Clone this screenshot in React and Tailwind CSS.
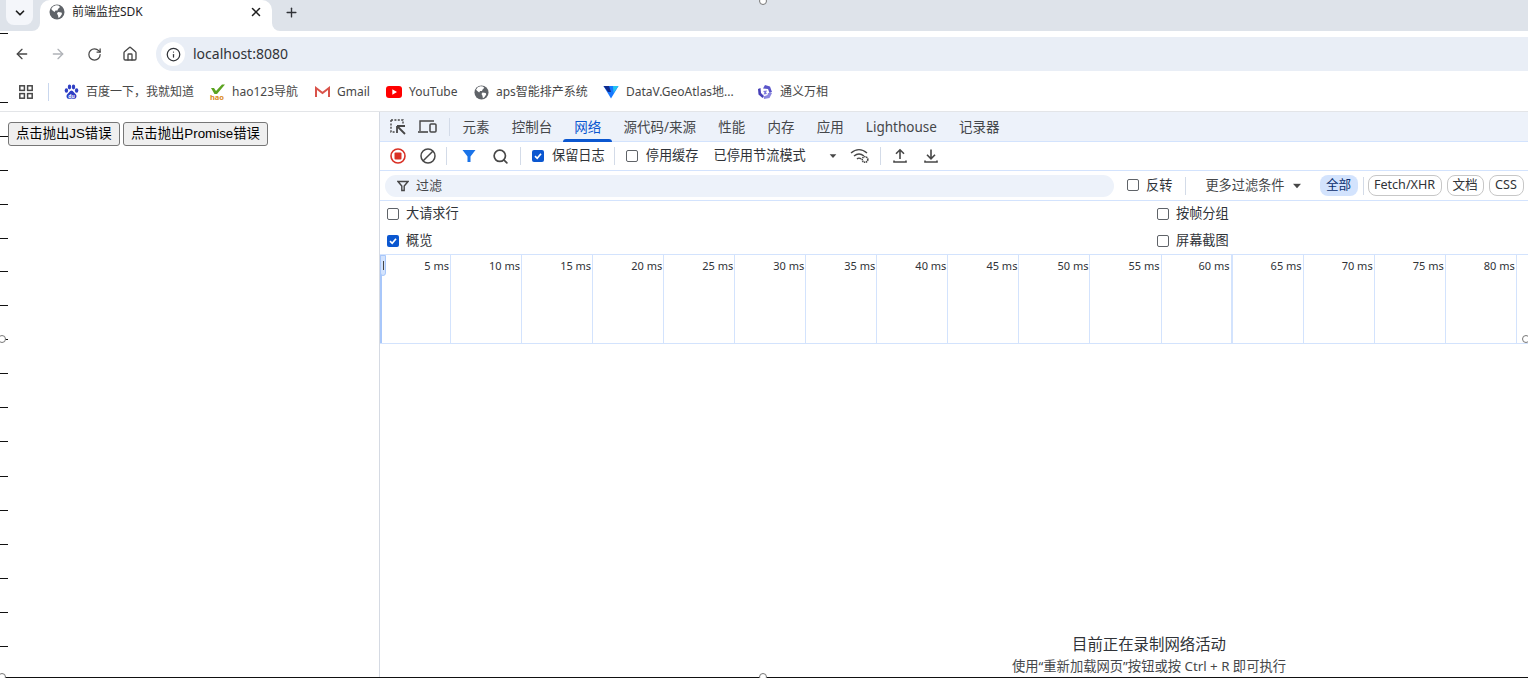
import React from 'react';
import { ArrowLeft, ArrowRight, RotateCw, Home, Info, Plus, X, ChevronDown, Search } from 'lucide-react';

const ticks = [33, 102, 136, 170, 204, 238, 271, 305, 339, 373, 407, 441, 476, 510, 544, 578, 612, 646];
const handles = [[763, 1], [1526, 339], [2, 339], [2, 677], [763, 677]];
const devTabs = ['元素', '控制台', '网络', '源代码/来源', '性能', '内存', '应用', 'Lighthouse', '记录器'];
const timeLabels = [5, 10, 15, 20, 25, 30, 35, 40, 45, 50, 55, 60, 65, 70, 75, 80];

function GlobeIcon({ size = 16 }) {
    return (
        <svg width={size} height={size} viewBox="0 0 16 16" className="shrink-0">
            <circle cx="8" cy="8" r="7.5" fill="#5f6368" />
            <path d="M7 1.2 L9.5 1.5 L11 3 L9 5 L8.5 6.5 L6.5 6.5 L5.5 8 L3.5 6.5 L2.2 5 L4 2.5 Z" fill="#fff" />
            <path d="M9 8 L12.5 8.5 L13 10 L11 13 L9.5 14 L9 11.5 L8 9.5 Z" fill="#fff" />
        </svg>
    );
}

function Bookmark({ icon, label, width }) {
    return (
        <div className="flex items-center gap-[7px] shrink-0 text-[12px] text-[#474747]" style={{ width }}>
            {icon}
            <span className="whitespace-nowrap">{label}</span>
        </div>
    );
}

function Check({ checked, label, wide, className = '' }) {
    return (
        <label className={`flex items-center ${wide ? 'gap-[8px]' : 'gap-[7px]'} text-[13.2px] text-[#303338] ${className}`}>
            {checked ? (
                <span className="w-[12px] h-[12px] rounded-[2px] bg-[#0b57d0] flex items-center justify-center shrink-0">
                    <svg width="10" height="10" viewBox="0 0 10 10"><path d="M2 5.2 L4.2 7.3 L8 2.8" stroke="#fff" strokeWidth="1.7" fill="none" /></svg>
                </span>
            ) : (
                <span className="w-[12px] h-[12px] rounded-[2px] border border-[#5f6368] bg-white shrink-0" />
            )}
            <span className="whitespace-nowrap">{label}</span>
        </label>
    );
}

function Sep({ className = '' }) {
    return <div className={`w-px h-[18px] bg-[#d3dbe8] shrink-0 ${className}`} />;
}

function Caret({ className = '' }) {
    return (
        <svg width="10" height="6" viewBox="0 0 10 6" className={`shrink-0 ${className}`}>
            <path d="M0.5 0.5 H9.5 L5 5.5 Z" fill="#474747" />
        </svg>
    );
}

export default function App() {
    return (
        <div className="relative w-[1528px] h-[678px] overflow-hidden bg-white flex flex-col" style={{ fontFamily: '"Noto Sans", "Noto Sans CJK SC", sans-serif' }}>
            {/* tab strip */}
            <div className="h-[31px] bg-[#dee3ea] flex shrink-0 relative">
                <div className="w-[27px] h-[25px] ml-[6px] rounded-b-[8px] bg-[#f4f6fa] flex items-center justify-center">
                    <ChevronDown size={14} strokeWidth={3} className="text-[#1f1f1f]" />
                </div>
                <div className="relative w-[232px] h-[31px] ml-[7px] bg-white rounded-t-[10px] flex items-center pl-[9px] pr-[9px] pb-[8px]">
                    <GlobeIcon />
                    <span className="ml-[7px] text-[12px] text-[#1f1f1f] flex-1">前端监控SDK</span>
                    <X size={14} strokeWidth={2.6} className="text-[#1f1f1f]" />
                    <div className="absolute -left-[8px] bottom-0 w-[8px] h-[8px] bg-white">
                        <div className="w-full h-full bg-[#dee3ea] rounded-br-[8px]" />
                    </div>
                    <div className="absolute -right-[8px] bottom-0 w-[8px] h-[8px] bg-white">
                        <div className="w-full h-full bg-[#dee3ea] rounded-bl-[8px]" />
                    </div>
                </div>
                <div className="ml-[12px] h-[24px] flex items-center">
                    <Plus size={15} strokeWidth={2.2} className="text-[#303338]" />
                </div>
            </div>

            {/* address bar */}
            <div className="h-[40px] pt-[6px] flex items-center shrink-0 bg-white">
                <ArrowLeft size={16} strokeWidth={2} className="ml-[14px] text-[#474747]" />
                <ArrowRight size={16} strokeWidth={2} className="ml-[20px] text-[#b0b3b8]" />
                <RotateCw size={15} strokeWidth={2} className="ml-[21px] text-[#474747]" />
                <Home size={16} strokeWidth={2} className="ml-[20px] text-[#474747]" />
                <div className="ml-[18px] flex-1 h-[34px] bg-[#e9eef6] rounded-l-full flex items-center pl-[5px]">
                    <div className="w-[24px] h-[24px] rounded-full bg-white flex items-center justify-center">
                        <Info size={15} strokeWidth={2} className="text-[#303338]" />
                    </div>
                    <span className="ml-[8px] text-[14px] text-[#303338] -mt-[1px]">localhost:8080</span>
                </div>
            </div>

            {/* bookmarks */}
            <div className="h-[41px] pt-[2px] flex items-center shrink-0 bg-white border-b border-[#e3e5e8] pl-[19px]">
                <svg width="14" height="14" viewBox="0 0 14 14" className="shrink-0">
                    <g fill="none" stroke="#474747" strokeWidth="1.5">
                        <rect x="0.8" y="0.8" width="4.6" height="4.6" />
                        <rect x="8.6" y="0.8" width="4.6" height="4.6" />
                        <rect x="0.8" y="8.6" width="4.6" height="4.6" />
                        <rect x="8.6" y="8.6" width="4.6" height="4.6" />
                    </g>
                </svg>
                <Sep className="ml-[15px] mr-[15px] !bg-[#c9d7ee]" />
                <Bookmark width="145px" label="百度一下，我就知道" icon={
                    <svg width="15" height="16" viewBox="0 0 15 16" className="shrink-0">
                        <g fill="#2f3fc4">
                            <ellipse cx="2.4" cy="6.5" rx="1.7" ry="2.2" />
                            <ellipse cx="5.5" cy="3" rx="1.7" ry="2.4" />
                            <ellipse cx="9.5" cy="3" rx="1.7" ry="2.4" />
                            <ellipse cx="12.6" cy="6.5" rx="1.7" ry="2.2" />
                            <path d="M7.5 6.5 C5.5 6.5 5 9 3.5 10 C2 11.2 2 14.8 5 14.8 C6 14.8 6.5 14.4 7.5 14.4 C8.5 14.4 9 14.8 10 14.8 C13 14.8 13 11.2 11.5 10 C10 9 9.5 6.5 7.5 6.5 Z" />
                        </g>
                        <text x="7.5" y="13.5" textAnchor="middle" fontSize="5" fontWeight="700" fill="#fff">du</text>
                    </svg>
                } />
                <Bookmark width="106px" label="hao123导航" icon={
                    <svg width="16" height="16" viewBox="0 0 16 16" className="shrink-0">
                        <path d="M2 4 L5 4 L7 7 L13 0.5 L16 0.5 L8 10 L5.5 10 Z" fill="#5ba320" />
                        <text x="8" y="15.5" textAnchor="middle" fontSize="7.5" fontWeight="700" fill="#d98a1a">hao</text>
                    </svg>
                } />
                <Bookmark width="71px" label="Gmail" icon={
                    <svg width="15" height="12" viewBox="0 0 15 12" className="shrink-0">
                        <path d="M1 11 V2 L7.5 7 L14 2 V11" fill="none" stroke="#d9534a" strokeWidth="2" />
                    </svg>
                } />
                <Bookmark width="88px" label="YouTube" icon={
                    <svg width="16" height="12" viewBox="0 0 16 12" className="shrink-0">
                        <rect width="16" height="12" rx="3" fill="#f00" />
                        <path d="M6.3 3.2 L11 6 L6.3 8.8 Z" fill="#fff" />
                    </svg>
                } />
                <Bookmark width="129px" label="aps智能排产系统" icon={<GlobeIcon size={15} />} />
                <Bookmark width="154px" label="DataV.GeoAtlas地..." icon={
                    <svg width="16" height="14" viewBox="0 0 16 14" className="shrink-0">
                        <path d="M0.5 1 H15.5 L8 13.5 Z" fill="#1677ff" />
                        <path d="M0.5 1 H6 L8 7 L5 7 Z" fill="#102a8c" />
                        <path d="M10 1 H15.5 L10.5 8 Z" fill="#23c4f0" />
                    </svg>
                } />
                <Bookmark label="通义万相" icon={
                    <svg width="16" height="16" viewBox="0 0 16 16" className="shrink-0">
                        <path d="M8 1 L13 2.5 L15 8 L12.5 9 L11 5 L6 4.5 Z" fill="#5a55c9" />
                        <path d="M15 9 L12.5 14 L7 15 L6.5 12.5 L10.5 11 L11 9 Z" fill="#8a86e0" />
                        <path d="M5.5 14 L1.5 10.5 L1 5 L3.5 4 L4 9 L7 12 Z" fill="#4740b8" />
                        <path d="M6 7 L10 6.5 L9 8.5 L10 10 L6.5 10.5 L7.5 8.5 Z" fill="#7d78dc" />
                    </svg>
                } />
            </div>

            {/* page + devtools */}
            <div className="flex-1 flex min-h-0">
                <div className="w-[380px] shrink-0 pt-[10px] pl-[8px] flex items-start gap-[3px] border-r border-[#d5dae3]" style={{ fontFamily: '"Liberation Sans", "Noto Sans CJK SC", sans-serif' }}>
                    <button className="h-[24px] px-[7px] text-[13.33px] text-black bg-[#efefef] border border-[#767676] rounded-[3px] whitespace-nowrap">点击抛出JS错误</button>
                    <button className="h-[24px] px-[7.5px] text-[13.33px] text-black bg-[#efefef] border border-[#767676] rounded-[3px] whitespace-nowrap">点击抛出Promise错误</button>
                </div>

                <div className="flex-1 min-w-0 flex flex-col">
                    {/* panel tabs */}
                    <div className="h-[30px] bg-[#edf2fa] border-b border-[#d3e3fd] flex items-center shrink-0 pl-[8px]">
                        <svg width="20" height="20" viewBox="0 0 20 20" className="shrink-0">
                            <path d="M3 3 H15 V7 M3 3 V15 H7" fill="none" stroke="#474747" strokeWidth="1.4" strokeDasharray="2 1.4" />
                            <path d="M9 9 L17 9 M9 9 L9 16 M9 9 L17 17" stroke="#474747" strokeWidth="1.8" fill="none" />
                        </svg>
                        <svg width="22" height="20" viewBox="0 0 22 20" className="ml-[9px] shrink-0">
                            <path d="M3 14 V4 H17" fill="none" stroke="#474747" strokeWidth="1.4" />
                            <path d="M1 15 H11" stroke="#474747" strokeWidth="1.6" />
                            <rect x="13" y="7" width="6" height="8" rx="1" fill="none" stroke="#474747" strokeWidth="1.5" />
                        </svg>
                        <Sep className="ml-[10px]" />
                        <div className="flex ml-[1.4px] h-full">
                            {devTabs.map((t) => (
                                <div key={t} className={`relative px-[11.1px] pt-[2px] flex items-center text-[13.5px] whitespace-nowrap ${t === '网络' ? 'text-[#0b57d0]' : 'text-[#45474a]'}`}>
                                    {t}
                                    {t === '网络' && <span className="absolute left-0 right-0 -bottom-px h-[3px] bg-[#0b57d0] rounded-t-[3px]" />}
                                </div>
                            ))}
                        </div>
                    </div>

                    {/* network toolbar */}
                    <div className="h-[29px] border-b border-[#d3e3fd] flex items-center shrink-0 pl-[10px]">
                        <svg width="16" height="16" viewBox="0 0 16 16" className="shrink-0">
                            <circle cx="8" cy="8" r="7" fill="none" stroke="#d93025" strokeWidth="1.6" />
                            <rect x="4.5" y="4.5" width="7" height="7" rx="1" fill="#d93025" />
                        </svg>
                        <svg width="16" height="16" viewBox="0 0 16 16" className="ml-[14px] shrink-0">
                            <circle cx="8" cy="8" r="7" fill="none" stroke="#474747" strokeWidth="1.5" />
                            <path d="M3.2 12.8 L12.8 3.2" stroke="#474747" strokeWidth="1.5" />
                        </svg>
                        <Sep className="ml-[10px]" />
                        <svg width="14" height="14" viewBox="0 0 14 14" className="ml-[15px] shrink-0">
                            <path d="M0.5 1 H13.5 L8.5 7.5 V13 L5.5 13 V7.5 Z" fill="#1a73e8" />
                        </svg>
                        <Search size={17} strokeWidth={2.4} className="ml-[16px] text-[#474747]" />
                        <Sep className="ml-[11px]" />
                        <Check checked wide label="保留日志" className="ml-[11px]" />
                        <Sep className="ml-[9px]" />
                        <Check wide label="停用缓存" className="ml-[11px]" />
                        <span className="ml-[15px] text-[13.2px] text-[#303338] whitespace-nowrap">已停用节流模式</span>
                        <Caret className="ml-[22px] scale-75" />
                        <svg width="20" height="16" viewBox="0 0 20 16" className="ml-[12px] shrink-0">
                            <path d="M1 5 C6 0.5 12 0.5 17 5 M4 8 C7 5.5 11 5.5 14 8 M7 11 C8 10 10 10 11 11" fill="none" stroke="#474747" strokeWidth="1.4" />
                            <circle cx="15" cy="11.5" r="2.8" fill="none" stroke="#474747" strokeWidth="1.6" strokeDasharray="1.4 0.6" />
                        </svg>
                        <Sep className="ml-[10px]" />
                        <svg width="16" height="16" viewBox="0 0 16 16" className="ml-[11px] shrink-0">
                            <path d="M8 11 V2 M4 5.8 L8 1.8 L12 5.8 M2 12.5 V14 H14 V12.5" fill="none" stroke="#474747" strokeWidth="1.6" />
                        </svg>
                        <svg width="16" height="16" viewBox="0 0 16 16" className="ml-[15px] shrink-0">
                            <path d="M8 1.5 V10.5 M4 6.8 L8 10.8 L12 6.8 M2 12.5 V14 H14 V12.5" fill="none" stroke="#474747" strokeWidth="1.6" />
                        </svg>
                    </div>

                    {/* filter row */}
                    <div className="h-[30px] border-b border-[#d3e3fd] flex items-center shrink-0 pl-[5px]">
                        <div className="w-[729px] h-[22px] bg-[#edf2fa] rounded-full flex items-center pl-[12px] shrink-0">
                            <svg width="12" height="12" viewBox="0 0 12 12" className="shrink-0">
                                <path d="M1 1.5 H11 L7.2 6 V10.5 H4.8 V6 Z" fill="none" stroke="#474747" strokeWidth="1.4" />
                            </svg>
                            <span className="ml-[7px] text-[13px] text-[#45474a]">过滤</span>
                        </div>
                        <Check label="反转" className="ml-[13px]" />
                        <Sep className="ml-[13px]" />
                        <span className="ml-[19px] text-[13.2px] text-[#45474a] whitespace-nowrap">更多过滤条件</span>
                        <Caret className="ml-[7px] scale-90" />
                        <span className="ml-[18px] w-[38px] h-[21px] rounded-[8px] bg-[#d3e3fd] text-[#0a2e6e] text-[12.6px] flex items-center justify-center shrink-0">全部</span>
                        <Sep className="ml-[5px]" />
                        <span className="ml-[4px] w-[74px] h-[21px] rounded-[8px] border border-[#c7c7c7] text-[#303338] text-[12.6px] flex items-center justify-center shrink-0">Fetch/XHR</span>
                        <span className="ml-[5px] w-[37px] h-[21px] rounded-[8px] border border-[#c7c7c7] text-[#303338] text-[12.6px] flex items-center justify-center shrink-0">文档</span>
                        <span className="ml-[5px] w-[35px] h-[21px] rounded-[8px] border border-[#c7c7c7] text-[#303338] text-[12.6px] flex items-center justify-center shrink-0">CSS</span>
                    </div>

                    {/* settings */}
                    <div className="h-[54px] border-b border-[#d3e3fd] grid grid-cols-[770px_1fr] grid-rows-2 shrink-0 pl-[7px]">
                        <Check label="大请求行" />
                        <Check label="按帧分组" />
                        <Check checked label="概览" />
                        <Check label="屏幕截图" />
                    </div>

                    {/* timeline */}
                    <div className="relative h-[89px] border-b border-[#d3e3fd] grid grid-cols-[repeat(16,71.06px)] shrink-0">
                        {timeLabels.map((n) => (
                            <div key={n} className={`text-right pr-[1px] pt-[3px] text-[11px] text-[#303338] ${n === 60 ? 'border-r-2' : 'border-r'} border-[#d3e3fd]`}>
                                {n} ms
                            </div>
                        ))}
                        <div className="absolute left-0 top-0 bottom-0 w-[2px] bg-[#a8c7fa]" />
                        <div className="absolute left-0 top-0 w-[6px] h-[21px] bg-[#d3e3fd] border border-[#a8c7fa] rounded-b-[3px] flex items-center justify-center">
                            <span className="w-px h-[9px] bg-[#474747]" />
                        </div>
                    </div>

                    {/* empty state */}
                    <div className="flex-1 min-h-0 flex flex-col justify-end items-center pl-[390px] pb-[3px]">
                        <div className="text-[15.4px] leading-[20px] text-[#303338]">目前正在录制网络活动</div>
                        <div className="mt-[2px] text-[13.3px] leading-[18px] text-[#45474a] whitespace-nowrap">使用“重新加载网页”按钮或按 Ctrl + R 即可执行</div>
                    </div>
                </div>
            </div>

            {/* capture overlay: ruler ticks, frame line, handles */}
            {ticks.map((y) => (
                <div key={y} className="absolute left-0 w-[8px] h-px bg-[#111]" style={{ top: y }} />
            ))}
            <div className="absolute left-0 right-0 bottom-0 h-px bg-[#111]" />
            {handles.map(([x, y]) => (
                <div key={`${x}-${y}`} className="absolute w-[8px] h-[8px] rounded-full bg-white border border-[#777]" style={{ left: x - 4, top: y - 4 }} />
            ))}
        </div>
    );
}
